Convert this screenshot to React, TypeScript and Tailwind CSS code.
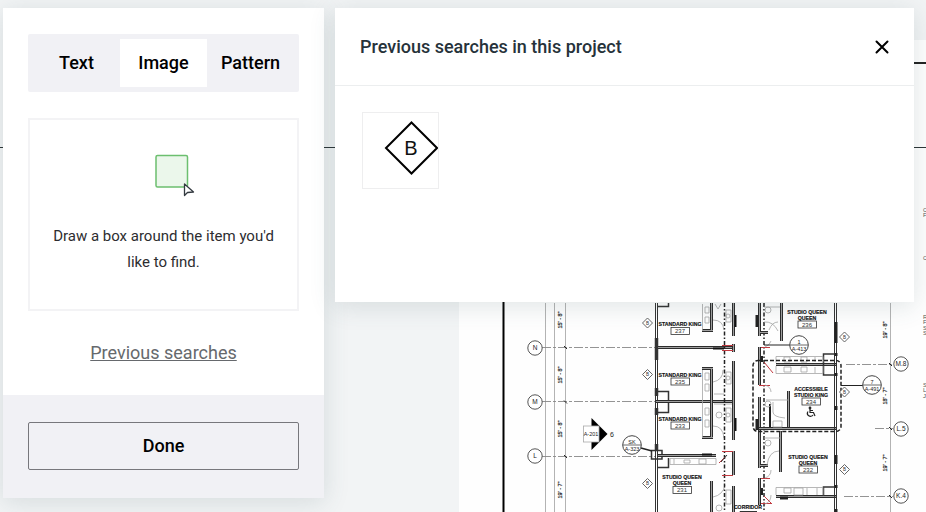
import React from "react";

type P = { x: number; y: number };

function Label({ x, y, children }: P & { children: React.ReactNode }) {
  return (
    <text x={x} y={y + 2} textAnchor="middle" fontSize="5.2" fontWeight="700" fill="#111" stroke="#111" strokeWidth=".15">
      {children}
    </text>
  );
}

function RoomNo({ x, y, n }: P & { n: string }) {
  return (
    <g>
      <rect x={x - 9} y={y - 3.5} width="18.500" height="7" fill="#fff" stroke="#333" strokeWidth=".8" />
      <text x={x} y={y + 2.2} textAnchor="middle" fontSize="6" fill="#333">{n}</text>
    </g>
  );
}

function Bubble({ x, y, t }: P & { t: string }) {
  return (
    <g>
      <circle cx={x} cy={y} r="7.2" fill="#fff" stroke="#555" strokeWidth="1" />
      <text x={x} y={y + 2.2} textAnchor="middle" fontSize="6.5" fill="#222">{t}</text>
    </g>
  );
}

function Detail({ x, y, a, b }: P & { a: string; b: string }) {
  return (
    <g>
      <circle cx={x} cy={y} r="9.3" fill="#fff" stroke="#444" strokeWidth="1" />
      <path d={`M${x - 9} ${y}h18`} stroke="#444" strokeWidth=".8" />
      <text x={x} y={y - 1.5} textAnchor="middle" fontSize="5.5" fill="#222">{a}</text>
      <text x={x} y={y + 5.5} textAnchor="middle" fontSize="5.5" fill="#222">{b}</text>
    </g>
  );
}

function Tag({ x, y }: P) {
  return (
    <g>
      <path d={`M${x} ${y - 5}l5 5l-5 5l-5 -5z`} fill="#fff" stroke="#555" strokeWidth=".9" />
      <text x={x} y={y + 1.6} textAnchor="middle" fontSize="4.5" fill="#333">B</text>
    </g>
  );
}

function Dim({ x, y, children }: P & { children: React.ReactNode }) {
  return (
    <text transform={`translate(${x + 2} ${y}) rotate(-90)`} textAnchor="middle" fontSize="5.5" fill="#222" stroke="#222" strokeWidth=".2">
      {children}
    </text>
  );
}

function Wall({ d }: { d: string }) {
  return (
    <g fill="none">
      <path d={d} stroke="#2c2c2c" strokeWidth="3" />
      <path d={d} stroke="#a0a0a0" strokeWidth="1" />
    </g>
  );
}

function FloorPlan() {
  return (
    <svg className="absolute top-0 left-0" width="926" height="512" viewBox="0 0 926 512" aria-hidden="true" fontFamily='"Liberation Sans", sans-serif'>
      <rect x="459" y="40" width="467" height="472" fill="#fefefe" />
      <path d="M0 147.5H926" stroke="#2c3436" strokeWidth="1" />
      <path d="M850 63H926" stroke="#222" strokeWidth="2" />
      <path d="M503.5 148V512" stroke="#000" strokeWidth="2" />

      <g stroke="#aaa" strokeWidth=".9">
        <path d="M545.5 303V512M554.5 303V512M565.5 303V512M890.5 303V512" />
      </g>
      <g stroke="#888" strokeWidth=".9" strokeDasharray="9 2 3 2">
        <path d="M542 347.5H655M542 401.500H655M542 456.5H655" />
        <path d="M846 364.5H893M875 428.5H893M844 496.5H893" />
      </g>
      <path d="M564 346l3 3M564 400.500l3 3M564 455l3 3M889 363l3 3M889 427l3 3M889 495l3 3" stroke="#222" />
      <Bubble x={535} y={348} t="N" />
      <Bubble x={535} y={402} t="M" />
      <Bubble x={535} y={456} t="L" />
      <Bubble x={901} y={364} t="M.8" />
      <Bubble x={901} y={429} t="L.5" />
      <Bubble x={901} y={496} t="K.4" />
      <Dim x={560} y={320}>15' - 8"</Dim>
      <Dim x={560} y={375}>15' - 8"</Dim>
      <Dim x={560} y={429}>15' - 8"</Dim>
      <Dim x={560} y={490}>19' - 7"</Dim>
      <Dim x={885} y={330}>19' - 8"</Dim>
      <Dim x={885} y={396}>18' - 7"</Dim>
      <Dim x={885} y={463}>19' - 7"</Dim>

      <path d="M591.500 418L607.500 434L591.500 450Z" fill="#000" />
      <rect x="583.5" y="426" width="15.500" height="16" fill="#fff" stroke="#aaa" strokeWidth=".8" />
      <text x="591" y="436" textAnchor="middle" fontSize="5.5" fill="#222">A-201</text>
      <text x="612" y="436.500" textAnchor="middle" fontSize="7" fill="#222">6</text>

      {/* West rooms */}
      <g fill="none" stroke="#333" strokeWidth="1">
        <path d="M655.5 303V512M657.500 303V512" />
        <path d="M658 306.500H668.500V303M658 391.500H668.500V400M658 412.500H668.500V403M658 467.500H668.500V458" strokeWidth="1.500" />
        <rect x="651.500" y="450.500" width="10.500" height="8.500" strokeWidth="1.500" />
      </g>
      <path d="M656.500 338V360M656.500 388V396M656.500 408V415M656.500 444V451" stroke="#333" strokeWidth="3.500" />
      <Wall d="M658 347.500H733M656 401.500H735M658 455.500H716" />
      <Wall d="M733.500 303V336M733.500 344V352M733.500 361V440M733.500 451V475M733.500 486V512" />
      <Wall d="M711.500 303V331M702 330.500H713M702 368.500H713M711.500 368V438M702 437.500H713M711.500 481V512" />
      <path d="M713 348.500H724M702 454.500H712M735.500 315V327M735.500 418V431" stroke="#111" strokeWidth="2" />
      <g fill="none" stroke="#a4a4a4" strokeWidth=".8">
        <path d="M702.500 304V330M702.500 370V437M705 307h4v6h-4zM705 317h4v6h-4zM705 373h4v7h-4zM705 384h4v7h-4zM705 408h4v7h-4zM705 420h4v7h-4z" />
        <path d="M670 458.500H716V464.500H670zM674 459V464M684 460h6v3h-6zM699 459h7v5h-7z" />
        <path d="M715 304l3 5l3 -5M726 310h5v12h-5zM726 372h5v12h-5zM726 408h5v14h-5zM726 490h5v14h-5zM714 404H732M714 394H724" />
        <path d="M713 320q10 0 11 10M713 382q10 -2 10 -12M713 426q10 0 11 12M713 497q10 -2 12 -12" />
        <circle cx="728" cy="316" r="2" />
        <circle cx="728" cy="378" r="2" />
        <circle cx="719" cy="415" r="3" />
        <circle cx="728" cy="415" r="2" />
        <circle cx="719" cy="508" r="3" />
      </g>
      <path d="M724.500 303V512M764 303V512" stroke="#222" strokeWidth="1.500" strokeDasharray="4 2 1.500 2" />
      <g fill="none" stroke="#c23a40" strokeWidth="1">
        <path d="M722 345.500H733M722 350.500H733M722 451.500H733M722 475.500H733" />
        <path d="M719 463L725 457M759 347.500H770M764 362L773 373M759 385.500H770M759 478.500H770M764 496L772 504M759 503.500H772" />
      </g>
      <path d="M721 462l6 -7" stroke="#333" />
      <Label x={680} y={324}>STANDARD KING</Label>
      <RoomNo x={680} y={331} n="237" />
      <Label x={680} y={375}>STANDARD KING</Label>
      <RoomNo x={680} y={381.500} n="235" />
      <Label x={680} y={419}>STANDARD KING</Label>
      <RoomNo x={680} y={425.500} n="233" />
      <Label x={682} y={477}>STUDIO QUEEN</Label>
      <Label x={682} y={483}>QUEEN</Label>
      <RoomNo x={682} y={490} n="231" />
      <path d="M641 448L652 451" stroke="#222" strokeWidth="1.500" />
      <Detail x={632} y={445} a="SK" b="A-323" />
      <Tag x={647.500} y={323} />
      <Tag x={647.500} y={374.500} />
      <Tag x={647.500} y={483.500} />

      {/* East rooms */}
      <Wall d="M759.500 303V336M759.500 347V385M759.500 397V468M759.500 478V505M781.500 303V341M788.500 391V428M780.500 431V472M759 332.500H768M759 465.500H768" />
      <Wall d="M776 364.500H836M759 428.500H836M776 496.500H836" />
      <g fill="none" stroke="#333">
        <path d="M834.500 303V512M836.500 303V512" />
        <path d="M835 354H823.500V375H835M835 487H823.500V496" strokeWidth="1.500" />
      </g>
      <path d="M836 322V343M836 353V356M836 373V376M836 406V410M836 455V464M836 485V488M836 509V512M757 315V327M757 419V430M780 498H788" stroke="#222" strokeWidth="3" />
      <path d="M762 356V362M770 404V427M762 488V495" stroke="#222" strokeWidth="2" />
      <g fill="none" stroke="#a4a4a4" strokeWidth=".8">
        <path d="M776 356.500H823V362.500M776 362.500V356.500M776 373.500H823V366M776 373.500V366M784 357h6v5h-6zM801 357h6v5h-6zM815 357v5M784 367h7v5h-7zM801 367h6v5h-6zM815 367v6" />
        <path d="M776 487.500H823V495M776 487.500V495M784 488h7v5h-7zM794 488h9v7h-9zM807 488v7M817 488v7M773 421h9v6h-9z" />
        <path d="M764 307H780M764 322q9 -1 14 9M769 330q3 -8 9 -8M766 400H788M773 402v10q0 5 12 6M764 438H780M767 465q2 -14 12 -14M765 347q5 -2 6 -6M765 385q6 2 6 7M765 478q6 -2 6 -8M765 504q6 -2 6 -9" />
        <circle cx="768" cy="310" r="3" />
        <circle cx="768" cy="404" r="3" />
        <circle cx="768" cy="443" r="3" />
      </g>
      <rect x="753" y="360.500" width="88" height="71" rx="5" fill="none" stroke="#222" strokeWidth="1.500" strokeDasharray="4 2" />
      <Label x={807} y={312}>STUDIO QUEEN</Label>
      <Label x={807} y={318}>QUEEN</Label>
      <RoomNo x={807} y={324.500} n="236" />
      <Label x={811} y={389}>ACCESSIBLE</Label>
      <Label x={811} y={395}>STUDIO KING</Label>
      <RoomNo x={811} y={401.500} n="234" />
      <Label x={808} y={457}>STUDIO QUEEN</Label>
      <Label x={808} y={463}>QUEEN</Label>
      <RoomNo x={808} y={469.500} n="232" />
      <g fill="none" stroke="#222" strokeWidth="1.200">
        <circle cx="810" cy="408" r=".8" />
        <path d="M810 409V412.500H813.500L815 416M810 410.500H813M808 411.500A3 3 0 1 0 813 415" />
      </g>
      <path d="M764 345H790M841 385.500H863" stroke="#222" strokeWidth="1.200" />
      <Tag x={844.500} y={337} />
      <Tag x={844.500} y={392} />
      <Tag x={844.500} y={469.500} />
      <Detail x={799} y={345} a="1" b="A-413" />
      <Detail x={872} y={385} a="7" b="A-491" />
      <Label x={748} y={507}>CORRIDOR</Label>
      <path d="M740 512V511.500H757" stroke="#333" fill="none" />

      {/* General notes column running off the sheet */}
      <g fontSize="6" fill="#555">
        <text x="923" y="212">C</text>
        <text x="923" y="217">F</text>
        <text x="923" y="260">C</text>
        <text x="923" y="319">R</text>
        <text x="923" y="324">F</text>
        <text x="923" y="330">S</text>
        <text x="923" y="335">S</text>
        <text x="923" y="387">S</text>
        <text x="923" y="392">L</text>
        <text x="923" y="398">J</text>
      </g>
    </svg>
  );
}

function SearchPanel() {
  const [mode, setMode] = React.useState("Image");
  const tabs = ["Text", "Image", "Pattern"];
  return (
    <aside className="w-[321px] shrink-0 bg-white shadow-[0_4px_24px_rgba(60,95,100,0.16)]">
      <div className="px-[25px] pt-[26px] pb-7">
        <div role="group" aria-label="Search type" className="grid grid-cols-3 rounded-xs bg-[#f1f1f5] px-[5px] py-[5px]">
          {tabs.map((tab) => (
            <button
              key={tab}
              type="button"
              aria-pressed={mode === tab}
              onClick={() => setMode(tab)}
              className={mode === tab ? "h-12 bg-white text-lg font-medium" : "h-12 text-lg font-medium"}
            >
              {tab}
            </button>
          ))}
        </div>
        <div className="mt-[26px] flex h-[193px] flex-col items-center border-2 border-[#f3f3f5] px-4 pt-[34px]">
          <svg width="42" height="44" viewBox="0 0 42 44" className="ml-6 shrink-0" aria-hidden="true">
            <rect x="1" y="1.500" width="31.500" height="31.500" rx="1.500" fill="#ebf7eb" stroke="#6cbf6f" strokeWidth="1.500" />
            <path d="M29.500 30V41.500L32.500 38.500L38.500 38Z" fill="#fff" stroke="#333a40" strokeWidth="1.300" strokeLinejoin="round" />
          </svg>
          <p className="mt-[25px] text-center text-[15px] leading-[26px] text-[#2d2d30]">
            Draw a box around the item you'd
            <br />
            like to find.
          </p>
        </div>
        <div className="mt-7 flex justify-center">
          <a href="#previous" className="text-lg text-[#66696d] underline">Previous searches</a>
        </div>
      </div>
      <div className="bg-[#f1f1f5] px-[25px] pt-[27px] pb-7">
        <button type="button" className="h-12 w-full rounded-xs border border-[#77777c] text-lg font-medium">
          Done
        </button>
      </div>
    </aside>
  );
}

function PreviousSearches() {
  return (
    <section id="previous" className="min-w-0 flex-1 bg-white shadow-[0_4px_24px_rgba(60,95,100,0.16)]">
      <header className="flex h-[78px] items-center justify-between border-b border-[#eceeef] pr-6 pl-[25px]">
        <h2 className="text-lg font-medium text-[#26323a]">Previous searches in this project</h2>
        <button type="button" aria-label="Close" className="flex size-4 items-center justify-center">
          <svg width="14" height="14" viewBox="0 0 14 14" aria-hidden="true">
            <path d="M1.500 1.500L12.500 12.500M12.500 1.500L1.500 12.500" stroke="#000" strokeWidth="2" strokeLinecap="round" />
          </svg>
        </button>
      </header>
      <div className="h-[216px] px-[27px] pt-[26px]">
        <button type="button" aria-label="Search symbol B" className="block size-[77px] border border-[#eeeeef]">
          <svg width="75" height="75" viewBox="0 0 75 75" aria-hidden="true">
            <path d="M48.500 9.500L74 35L48.500 60.500L23 35Z" fill="none" stroke="#000" strokeWidth="2" />
            <text x="48" y="42" textAnchor="middle" fontSize="20" fill="#111" fontFamily='"Liberation Sans", sans-serif'>B</text>
          </svg>
        </button>
      </div>
    </section>
  );
}

export default function App() {
  return (
    <main className="relative h-screen overflow-hidden bg-[#f2f4f5] font-['Roboto',sans-serif] text-black">
      <FloorPlan />
      <div className="relative flex items-start gap-[11px] pt-2 pr-3 pl-[3px]">
        <SearchPanel />
        <PreviousSearches />
      </div>
    </main>
  );
}
